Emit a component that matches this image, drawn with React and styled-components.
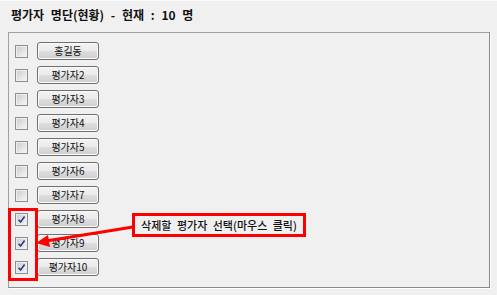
import React from 'react'
import styled, { createGlobalStyle } from 'styled-components'

const GlobalStyle = createGlobalStyle`
  html, body {
    margin: 0;
    padding: 0;
    background: #f0f0f0;
  }
  body {
    font-family: "Noto Sans CJK KR", "Noto Sans", sans-serif;
  }
`

const Page = styled.div`
  position: relative;
  width: 497px;
  height: 295px;
  box-sizing: border-box;
  border-top: 1px solid #fafafa;
  background: #f0f0f0;
  overflow: hidden;
`

const Title = styled.h1`
  margin: 0;
  padding: 6px 0 0 11px;
  height: 25px;
  box-sizing: border-box;
  font-size: 12px;
  font-weight: 700;
  line-height: 16px;
  word-spacing: 4px;
  color: #111;
`

const Panel = styled.div`
  margin: 6px 0 0 8px;
  width: 482px;
  height: 256px;
  box-sizing: border-box;
  border: 1px solid #a0a0a0;
  border-right-color: #8a8a8a;
  border-bottom-color: #8a8a8a;
  box-shadow: 1px 1px 0 #ffffff;
  padding: 9px 0 0 6px;
  display: flex;
  flex-direction: column;
  gap: 6px;
`

const Row = styled.div`
  display: flex;
  align-items: center;
  gap: 9px;
  height: 18px;
`

const Check = styled.span`
  width: 13px;
  height: 13px;
  box-sizing: border-box;
  border: 1px solid #8f8f8f;
  background: linear-gradient(135deg, #c9cbcf 0%, #e4e4e4 55%, #f6f6f6 100%);
  box-shadow: inset 0 0 0 1px #eeeeee;
  display: flex;
  align-items: center;
  justify-content: center;
`

const Button = styled.button`
  width: 62px;
  height: 18px;
  padding: 0;
  box-sizing: border-box;
  border: 1px solid #707070;
  border-radius: 3px;
  background: linear-gradient(#f3f3f3 0%, #ebebeb 48%, #dddddd 52%, #cfcfcf 100%);
  box-shadow: inset 0 0 0 1px #fbfbfb;
  font-family: "Noto Sans CJK KR", sans-serif;
  font-size: 10px;
  line-height: 16px;
  color: #111;
`

const Highlight = styled.div`
  position: absolute;
  left: 8px;
  top: 207px;
  width: 30px;
  height: 73px;
  box-sizing: border-box;
  border: 3px solid #ff0000;
`

const Callout = styled.div`
  position: absolute;
  left: 132px;
  top: 212px;
  width: 174px;
  height: 24px;
  box-sizing: border-box;
  border: 3px solid #ff0000;
  background: #f0f0f0;
  display: flex;
  align-items: center;
  justify-content: center;
  font-size: 11px;
  font-weight: 500;
  word-spacing: 3px;
  color: #111;
`

const Arrow = styled.svg`
  position: absolute;
  left: 0;
  top: 0;
  pointer-events: none;
`

const names = ['홍길동', '평가자2', '평가자3', '평가자4', '평가자5', '평가자6', '평가자7', '평가자8', '평가자9', '평가자10']
const checked = [7, 8, 9]

const Tick = () => (
  <svg width="9" height="9" viewBox="0 0 9 9">
    <path d="M1.5 4.8 L3.6 7 L7.6 1.5" fill="none" stroke="#2a3d8f" strokeWidth="1.6" />
  </svg>
)

const App = () => {
  return (
    <Page>
      <GlobalStyle />
      <Title>평가자 명단(현황) - 현재 : 10 명</Title>
      <Panel>
        {names.map((n, i) => (
          <Row key={n}>
            <Check>{checked.includes(i) && <Tick />}</Check>
            <Button>{n}</Button>
          </Row>
        ))}
      </Panel>
      <Highlight />
      <Callout>삭제할 평가자 선택(마우스 클릭)</Callout>
      <Arrow width="497" height="295">
        <line x1="133" y1="226" x2="46" y2="240" stroke="#ff0000" strokeWidth="3" />
        <polygon points="36,242 48,234 50,246" fill="#ff0000" />
      </Arrow>
    </Page>
  )
}

export default App
